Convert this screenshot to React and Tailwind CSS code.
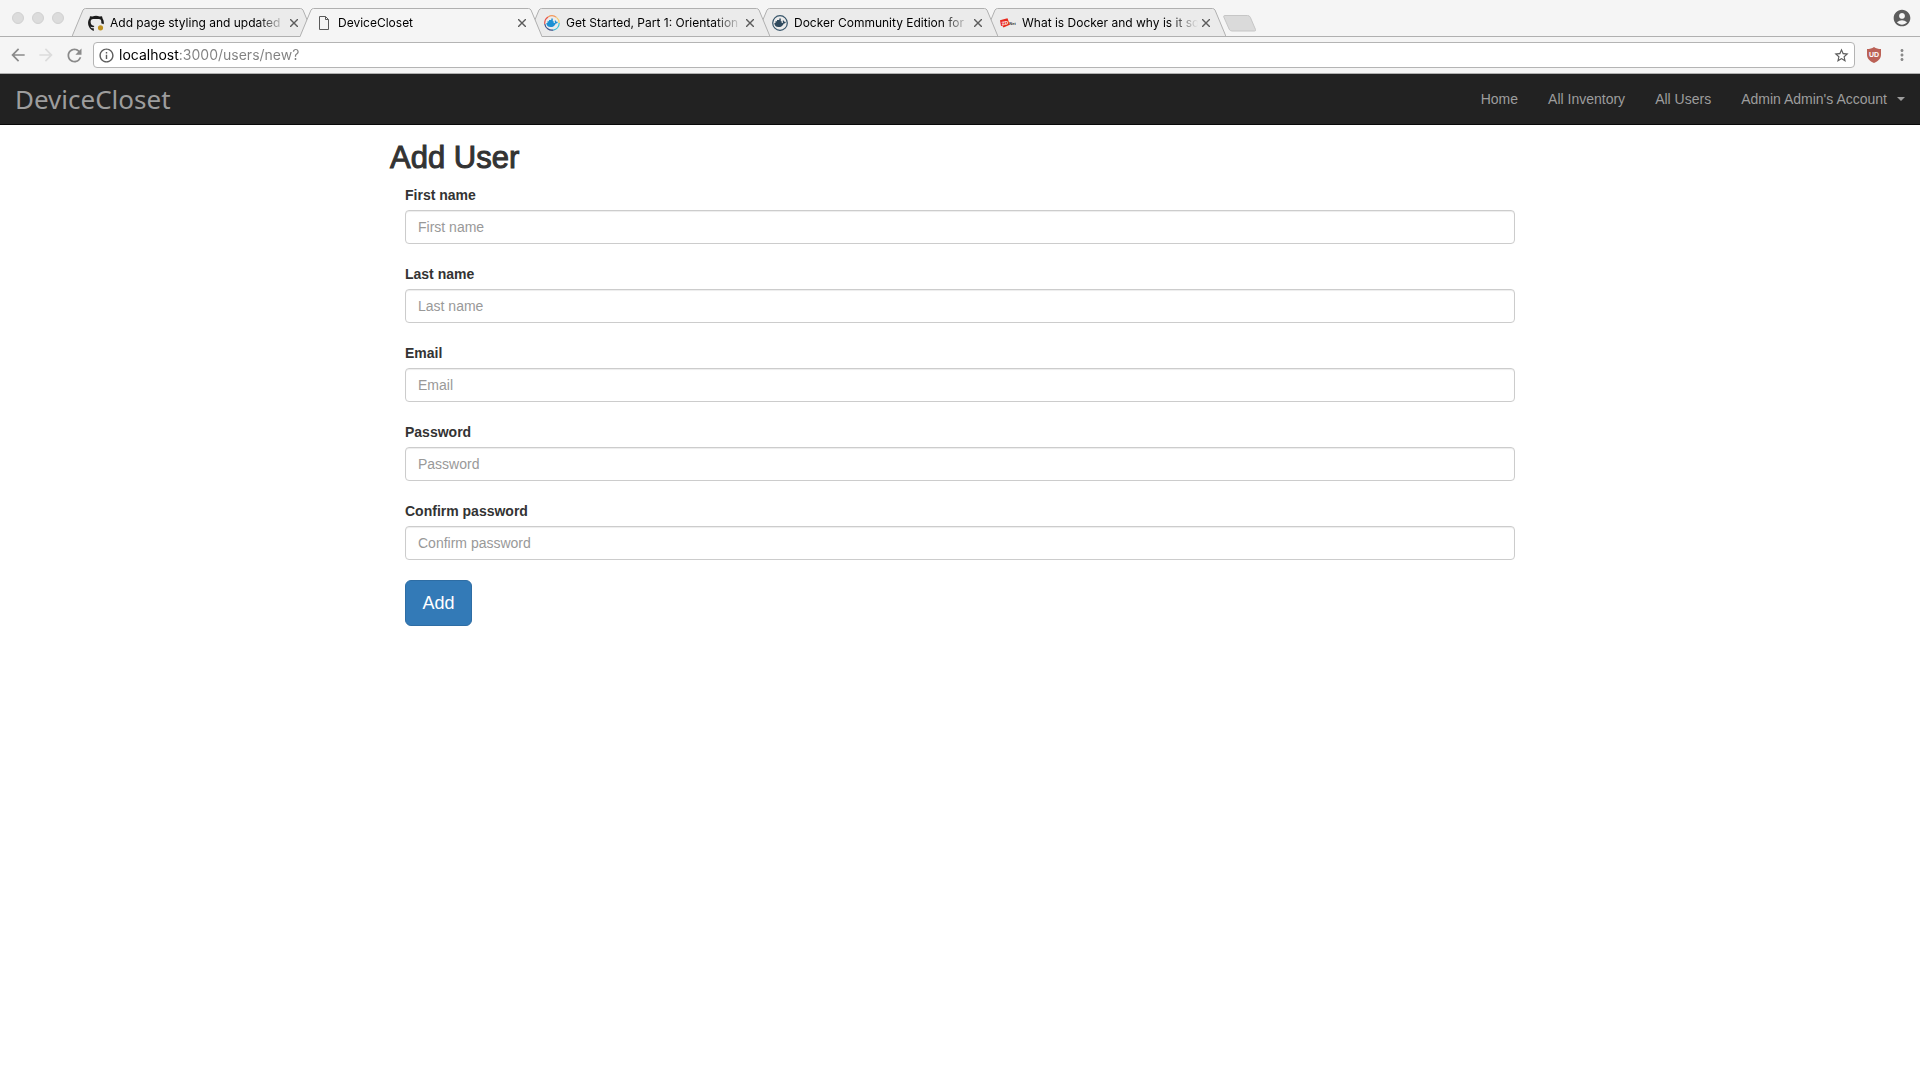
import clsx from "clsx";
import {
  MdAccountCircle,
  MdArrowBack,
  MdArrowForward,
  MdInfoOutline,
  MdMoreVert,
  MdRefresh,
  MdStarBorder,
} from "react-icons/md";

const GithubIcon = () => (
  <svg width="16" height="16" viewBox="0 0 16 16">
    <path
      d="M5.800 16V13.200C3.800 13.700 3 12.700 2.300 11.800C3.600 11.600 3.800 12.600 5.800 12C5.900 11.500 6.100 11.200 6.400 11C4 10.600 2.600 9.400 2.600 6.800C2.600 5.800 2.900 5 3.500 4.400C4.500 3.900 11.500 3.900 12.500 4.400C13.300 5.200 13.500 6.700 13.200 8.200L15.700 9.200C16.100 7.300 15.800 5.200 14.600 3.500L14 1.200L11.500 1.500C9.500.4 6.500.4 4.500 1.500L2 1.200L1.600 3.300C-.3 5.800-.4 9 1 11.800C2 13.800 3.500 15.300 5.800 16z"
      fill="#1b1b1b"
    />
    <circle cx="12.500" cy="12.800" r="2.600" fill="#bf9120" />
  </svg>
);

const PageIcon = () => (
  <svg width="16" height="16" viewBox="0 0 16 16" fill="none" stroke="#5a5a5a">
    <path d="M3.500 1.500h6l3 3v10h-9z M9.500 1.500v3h3" />
  </svg>
);

const Whale = ({ fill }) => (
  <g fill={fill}>
    <path d="M2.300 8h8.300c.5-.5.4-1.500 0-2.100l.6-.7c.7.4 1 1 1.100 1.600.6-.1 1.200 0 1.600.4-.5.9-1.300 1.200-2.100 1.200-1 2.400-2.700 3.700-5.300 3.700C3.900 12.100 2.500 10.600 2.300 8z" />
    <path d="M3.500 6.200h6.200v1.900H3.500z M5 4.900h3.800v1.400H5z M7.300 3.500h1.500v1.500H7.300z" />
  </g>
);

const DockerDocsIcon = () => (
  <svg width="16" height="16" viewBox="0 0 16 16" fill="none">
    <path d="M.8 9A7.200 7.200 0 0 1 4 2" stroke="#e8554a" strokeWidth="1.200" />
    <path d="M4 2a7.200 7.200 0 0 1 8.500.4" stroke="#f2985c" strokeWidth="1.200" />
    <path d="M12.500 2.400A7.200 7.200 0 0 1 15.200 8" stroke="#f6cc68" strokeWidth="1.200" />
    <path d="M15.200 8a7.200 7.200 0 0 1-6 7.100" stroke="#36c3d8" strokeWidth="1.200" />
    <path d="M9.200 15.100A7.200 7.200 0 0 1 .8 9" stroke="#3d4f86" strokeWidth="1.200" />
    <Whale fill="#1c90d4" />
  </svg>
);

const DockerStoreIcon = () => (
  <svg width="16" height="16" viewBox="0 0 16 16">
    <circle cx="8" cy="8" r="7.300" fill="none" stroke="#38566b" strokeWidth="1.200" />
    <Whale fill="#2f4a5e" />
  </svg>
);

const ZdnetIcon = () => (
  <svg width="16" height="16" viewBox="0 0 16 16" fontFamily="Liberation Sans" fontWeight="bold">
    <path d="M0 5.300L7.500 3.200L9.800 9.700L3.500 12.600L2.500 11L1 11z" fill="#e8281c" />
    <text x="1.500" y="9.800" fontSize="5" fill="#fff" transform="rotate(-12 5 8)">
      ZD
    </text>
    <text x="9.300" y="9.500" fontSize="4" fill="#333">
      Net
    </text>
  </svg>
);

const ShieldIcon = () => (
  <svg width="14" height="16" viewBox="0 0 14 16" fontFamily="Liberation Sans" fontWeight="bold">
    <path
      d="M7 0c2 1.400 4.300 2 7 2v5.500c0 4-2.600 6.600-7 8.500C2.600 14.100 0 11.500 0 7.500V2c2.700 0 5-.6 7-2z"
      fill="#bb6156"
    />
    <text x="7" y="9.600" fontSize="7" textAnchor="middle" fill="#fff">
      UD
    </text>
  </svg>
);

const tabs = [
  { title: "Add page styling and updated", icon: GithubIcon, layer: "z-10" },
  { title: "DeviceCloset", icon: PageIcon, layer: "z-40", active: true },
  { title: "Get Started, Part 1: Orientation", icon: DockerDocsIcon, layer: "z-30" },
  { title: "Docker Community Edition for", icon: DockerStoreIcon, layer: "z-20" },
  { title: "What is Docker and why is it so", icon: ZdnetIcon, layer: "z-10" },
];

const fields = [
  { id: "first_name", label: "First name", type: "text" },
  { id: "last_name", label: "Last name", type: "text" },
  { id: "email", label: "Email", type: "email" },
  { id: "password", label: "Password", type: "password" },
  { id: "password_confirmation", label: "Confirm password", type: "password" },
];

const Tab = ({ title, icon: Icon, layer, active }) => (
  <div
    className={clsx(
      "relative -mr-3.5 -mb-px flex h-[29px] w-[242px] items-center pr-3 pl-4",
      layer
    )}
  >
    <svg
      className="absolute inset-0"
      width="242"
      height="29"
      viewBox="0 0 242 29"
      fill={active ? "#f5f5f5" : "#ebebeb"}
    >
      <path d="M0 29L11 2Q12 .5 13.500.5H228.500Q230 .5 231 2L242 29z" />
      <path
        d="M0 28.500L11 2Q12 .5 13.500.5H228.500Q230 .5 231 2L242 28.500"
        fill="none"
        stroke="#b0b0b0"
      />
      {!active && <path d="M0 28.500H242" stroke="#b0b0b0" />}
    </svg>
    <button className="relative flex min-w-0 flex-1 items-center gap-1.5 text-left">
      <span className="shrink-0">
        <Icon />
      </span>
      <span className="flex-1 text-xs whitespace-nowrap text-black [mask-image:linear-gradient(to_right,black_148px,transparent_176px)]">
        {title}
      </span>
    </button>
    <button aria-label="Close tab" className="relative flex w-4 justify-center">
      <svg width="8" height="8" viewBox="0 0 8 8" stroke="#5c5c5c" strokeWidth="1.400">
        <path d="M0 0L8 8M8 0L0 8" />
      </svg>
    </button>
  </div>
);

const BrowserChrome = () => (
  <div className="bg-[#f5f5f5] font-[Inter,sans-serif]">
    <div className="flex h-[37px] items-end border-b border-[#b0b0b0]">
      <div className="flex w-[72px] gap-2 self-center pl-3">
        <span className="size-3 rounded-full border border-[#d1d1d1] bg-[#dcdcdc]" />
        <span className="size-3 rounded-full border border-[#d1d1d1] bg-[#dcdcdc]" />
        <span className="size-3 rounded-full border border-[#d1d1d1] bg-[#dcdcdc]" />
      </div>
      {tabs.map((tab) => (
        <Tab key={tab.title} {...tab} />
      ))}
      <button aria-label="New tab" className="mb-1 ml-[11px]">
        <svg width="34" height="17" viewBox="0 0 34 17">
          <path
            d="M2 .5H24.500Q26.500.5 27.300 2.300L32.500 14.500Q33 16 31.500 16H9Q7 16 6.200 14.200L.8 2Q.3.5 2 .5z"
            fill="#dadada"
            stroke="#c6c6c6"
          />
        </svg>
      </button>
      <button aria-label="Account" className="mr-2 ml-auto self-center">
        <MdAccountCircle size={20} color="#5c5c5c" />
      </button>
    </div>

    <div className="flex h-[37px] items-center border-b border-[#b0b0b0] pr-[9px] pl-2">
      <button aria-label="Back" className="w-7">
        <MdArrowBack size={20} color="#8a8a8a" />
      </button>
      <button aria-label="Forward" className="w-7">
        <MdArrowForward size={20} color="#dcdcdc" />
      </button>
      <button aria-label="Reload" className="w-[29px]">
        <MdRefresh size={21} color="#8a8a8a" />
      </button>
      <div className="flex h-[26px] flex-1 items-center rounded-sm border border-[#b4b4b4] bg-white pr-1 pl-1">
        <MdInfoOutline size={17} color="#5c5c5c" />
        <input
          aria-label="Address"
          defaultValue="localhost:3000/users/new?"
          className="ml-1 flex-1 bg-[linear-gradient(to_right,#000_60px,#808080_60px)] bg-clip-text text-sm text-transparent outline-none"
        />
        <button aria-label="Bookmark">
          <MdStarBorder size={17} color="#5c5c5c" />
        </button>
      </div>
      <button aria-label="Ad blocker" className="ml-3">
        <ShieldIcon />
      </button>
      <button aria-label="Menu" className="ml-3">
        <MdMoreVert size={18} color="#8a8a8a" />
      </button>
    </div>
  </div>
);

const Navbar = () => (
  <nav className="flex h-[51px] items-center justify-between border-b border-[#080808] bg-[#222] px-[15px] text-[#9d9d9d]">
    <a href="#" className="font-['Noto_Sans',sans-serif] text-[26px] leading-[50px]">
      DeviceCloset
    </a>
    <div className="flex gap-[30px] text-sm">
      <a href="#">Home</a>
      <a href="#">All Inventory</a>
      <a href="#">All Users</a>
      <a href="#" className="flex items-center gap-2.5">
        Admin Admin's Account
        <span className="border-x-4 border-t-4 border-x-transparent border-t-[#9d9d9d]" />
      </a>
    </div>
  </nav>
);

const App = () => (
  <div className="min-h-screen bg-white font-['Liberation_Sans',Arial,sans-serif] text-sm text-[#333]">
    <BrowserChrome />
    <Navbar />
    <main className="mx-auto max-w-[1140px] pt-4">
      <h1 className="mb-[11px] text-[31px] leading-[33px] [-webkit-text-stroke:1px_#333]">
        Add User
      </h1>
      <form className="px-[15px]" onSubmit={(e) => e.preventDefault()}>
        {fields.map((field) => (
          <div key={field.id} className="mb-5">
            <label htmlFor={field.id} className="mb-[5px] block leading-5 font-bold">
              {field.label}
            </label>
            <input
              id={field.id}
              type={field.type}
              placeholder={field.label}
              className="block h-[34px] w-full rounded border border-[#ccc] bg-white px-3 shadow-[inset_0_1px_1px_rgba(0,0,0,0.075)] outline-none placeholder:text-[#999]"
            />
          </div>
        ))}
        <button
          type="submit"
          className="h-[46px] w-[67px] rounded-md border border-[#2e6da4] bg-[#337ab7] text-lg text-white"
        >
          Add
        </button>
      </form>
    </main>
  </div>
);

export default App;
